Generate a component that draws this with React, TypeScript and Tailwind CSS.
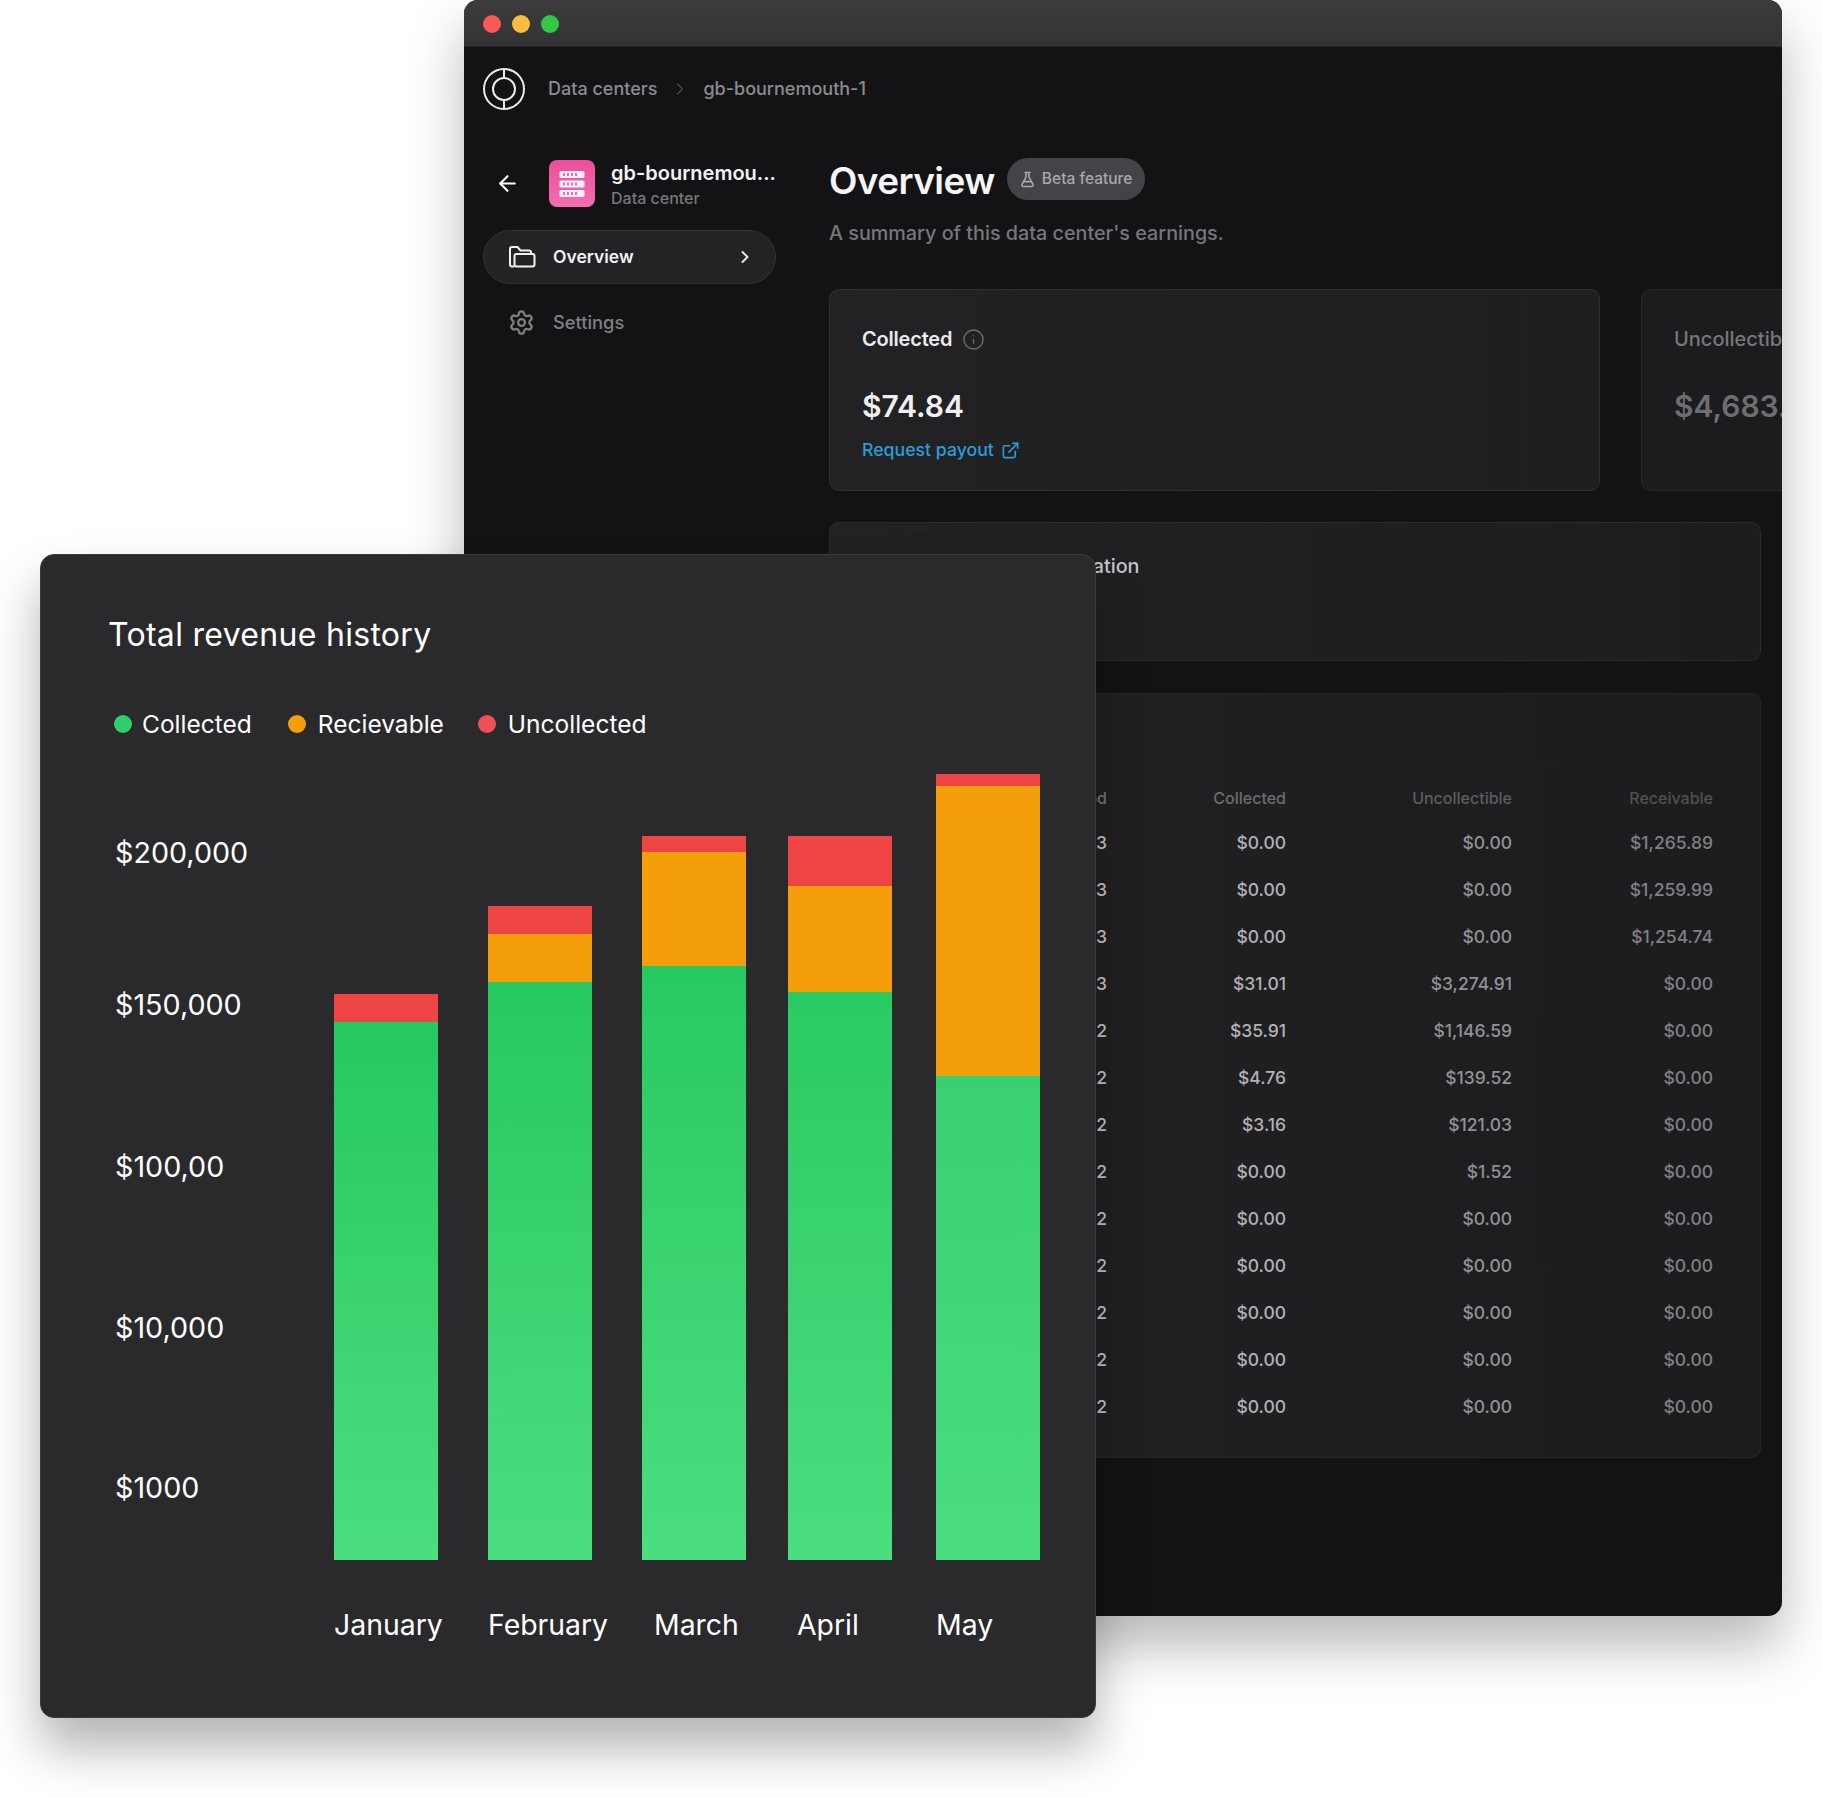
import { ArrowLeft, ChevronRight, ExternalLink, FlaskConical, Info, Settings } from "lucide-react";

const rows = [
  ["May 2023", "$0.00", "$0.00", "$1,265.89"],
  ["Apr 2023", "$0.00", "$0.00", "$1,259.99"],
  ["Mar 2023", "$0.00", "$0.00", "$1,254.74"],
  ["Jan 2023", "$31.01", "$3,274.91", "$0.00"],
  ["Dec 2022", "$35.91", "$1,146.59", "$0.00"],
  ["Nov 2022", "$4.76", "$139.52", "$0.00"],
  ["Oct 2022", "$3.16", "$121.03", "$0.00"],
  ["Sep 2022", "$0.00", "$1.52", "$0.00"],
  ["Aug 2022", "$0.00", "$0.00", "$0.00"],
  ["Jul 2022", "$0.00", "$0.00", "$0.00"],
  ["Jun 2022", "$0.00", "$0.00", "$0.00"],
  ["May 2022", "$0.00", "$0.00", "$0.00"],
  ["Apr 2022", "$0.00", "$0.00", "$0.00"],
];

// heights in px: red, orange, green
const bars = [
  { red: 28, orange: 0, green: 538, ml: 0, fill: "from-[#26c85f]" },
  { red: 28, orange: 48, green: 578, ml: 50, fill: "from-[#26c85f]" },
  { red: 16, orange: 114, green: 594, ml: 50, fill: "from-[#28c961]" },
  { red: 50, orange: 106, green: 568, ml: 42, fill: "from-[#2aca62]" },
  { red: 12, orange: 290, green: 484, ml: 44, fill: "from-[#38d070]" },
];

const LogoIcon = () => (
  <svg width="42" height="42" viewBox="0 0 42 42" fill="none" stroke="#ececee" strokeWidth="2">
    <circle cx="21" cy="21" r="20" />
    <circle cx="21" cy="21" r="11" />
    <path d="M21 1v9M21 32v9" />
  </svg>
);

const ServerIcon = () => (
  <svg width="28" height="30" viewBox="0 0 28 30" fill="none">
    <rect x="1.5" y="2" width="25" height="7" rx="1.5" fill="#fff" fillOpacity="0.9" />
    <rect x="1.5" y="11.5" width="25" height="7" rx="1.5" fill="#fff" fillOpacity="0.9" />
    <rect x="1.5" y="21" width="25" height="7" rx="1.5" fill="#fff" fillOpacity="0.9" />
    <path d="M6 4v3M10 4v3M14 4v3M18 4v3M6 13.5v3M10 13.5v3M14 13.5v3M18 13.5v3M6 23v3M10 23v3M14 23v3M18 23v3" stroke="#ec5aa5" strokeWidth="1.7" />
  </svg>
);

const FolderIcon = () => (
  <svg width="27" height="22" viewBox="0 0 27 22" fill="none" stroke="#f2f2f3" strokeWidth="2" strokeLinejoin="round">
    <path d="M5 20.5H3a2 2 0 0 1-2-2V3a2 2 0 0 1 2-2h5.5l3 3.5H20a2 2 0 0 1 2 2V8" />
    <rect x="5.5" y="8" width="20" height="12.5" rx="2" />
  </svg>
);

const TableRow = ({ row }: { row: string[] }) => (
  <div className="grid h-[47px] grid-cols-[245px_179px_226px_201px] items-center text-right text-[17.5px] font-medium">
    <span className="text-[#c4c4c6]">{row[0]}</span>
    <span className="text-[#b2b2b4]">{row[1]}</span>
    <span className="text-[#929294]">{row[2]}</span>
    <span className="text-[#808082]">{row[3]}</span>
  </div>
);

const BackWindow = () => (
  <div className="absolute left-[464px] top-0 h-[1616px] w-[1318px] overflow-hidden rounded-[14px] bg-[#131316] shadow-[0_30px_55px_rgba(0,0,0,0.28)]">
    <div className="flex h-[47px] items-center gap-[11px] border-b border-[#2a2a2c] bg-gradient-to-b from-[#3c3c3e] to-[#333335] pl-[19px] pt-[2px]">
      <div className="h-[18px] w-[18px] rounded-full bg-[#fc5753]" />
      <div className="h-[18px] w-[18px] rounded-full bg-[#fdbc40]" />
      <div className="h-[18px] w-[18px] rounded-full bg-[#33c748]" />
    </div>

    <div className="flex h-[83px] items-center pl-[19px] text-[18px] font-medium text-[#8c8c8f]">
      <LogoIcon />
      <span className="ml-[23px]">Data centers</span>
      <ChevronRight size={20} className="ml-[13px] text-[#4a4a4d]" strokeWidth={1.5} />
      <span className="ml-[13px]">gb-bournemouth-1</span>
    </div>

    <div className="flex">
      <div className="w-[365px] shrink-0 pl-[19px] pt-[30px]">
        <div className="flex h-[47px] items-center pl-[12px]">
          <ArrowLeft size={25} className="text-white" strokeWidth={2} />
          <div className="ml-[29px] flex h-[47px] w-[46px] items-center justify-center rounded-[8px] bg-gradient-to-b from-[#ec4c9c] to-[#f06fb0]">
            <ServerIcon />
          </div>
          <div className="ml-[16px] flex flex-col self-start">
            <span className="text-[20px] font-semibold leading-[26px] text-[#f2f2f3]">gb-bournemou...</span>
            <span className="text-[16px] font-medium leading-[24px] text-[#77777a]">Data center</span>
          </div>
        </div>
        <div className="mt-[23px] flex h-[54px] w-[293px] items-center rounded-full border border-[#323235] bg-[#232326] pl-[25px] pr-[20px]">
          <FolderIcon />
          <span className="ml-[17px] flex-1 text-[17.5px] font-semibold text-[#f2f2f3]">Overview</span>
          <ChevronRight size={20} className="text-[#e5e5e6]" strokeWidth={2.4} />
        </div>
        <div className="mt-[11px] flex h-[55px] items-center pl-[25px]">
          <Settings size={27} className="text-[#808083]" strokeWidth={2} />
          <span className="ml-[18px] text-[18.3px] font-medium text-[#808083]">Settings</span>
        </div>
      </div>

      <div className="min-w-0 flex-1 pt-[28px]">
        <div className="flex h-[42px] items-center">
          <h1 className="mt-[3px] text-[37px] font-semibold tracking-[-0.6px] text-[#f5f5f6]">Overview</h1>
          <div className="ml-[12px] flex h-[42px] w-[138px] items-center justify-center gap-[6px] rounded-full bg-[#434348] text-[15.5px] font-medium text-[#a9a9ac]">
            <FlaskConical size={17} strokeWidth={2.2} />
            <span>Beta feature</span>
          </div>
        </div>
        <p className="mt-[19px] text-[19.75px] font-medium leading-[28px] text-[#77777a]">
          A summary of this data center's earnings.
        </p>

        <div className="mt-[42px] flex w-[1000px] gap-[41px]">
          <div className="h-[202px] w-[771px] shrink-0 rounded-[10px] border border-[#2f2f33] bg-gradient-to-r from-[#222225] to-[#1f1f22] pl-[32px] pt-[37px]">
            <div className="flex h-[24px] items-center gap-[10px] text-[20px] font-semibold tracking-[-0.2px] text-[#eaeaeb]">
              Collected
              <Info size={23} className="text-[#6a6a6d]" strokeWidth={1.5} />
            </div>
            <div className="mt-[35px] text-[30px] font-semibold leading-[40px] text-[#f0f0f1]">$74.84</div>
            <div className="mt-[12px] flex h-[24px] items-center gap-[7px] text-[17.7px] font-medium text-[#2b9ed8]">
              Request payout
              <ExternalLink size={19} strokeWidth={2} />
            </div>
          </div>
          <div className="h-[202px] w-[300px] shrink-0 rounded-[10px] border border-[#28282b] bg-[#1c1c1f] pl-[32px] pt-[37px]">
            <div className="flex h-[24px] items-center text-[20px] font-medium text-[#77777a]">Uncollectible</div>
            <div className="mt-[35px] text-[30px] font-semibold leading-[40px] text-[#6e6e70]">$4,683.21</div>
          </div>
        </div>

        <div className="mt-[31px] h-[139px] w-[932px] rounded-[10px] border border-[#2b2b2f] bg-gradient-to-r from-[#222225] to-[#1d1d20] pl-[32px] pt-[31px]">
          <div className="text-[19.75px] font-medium leading-[24px] text-[#c4c4c6]">Payment account information</div>
        </div>

        <div className="mt-[32px] h-[765px] w-[932px] rounded-[10px] border border-[#262629] bg-gradient-to-r from-[#222225] to-[#1c1c1f] pl-[32px] pt-[81px]">
          <div className="grid h-[45px] grid-cols-[245px_179px_226px_201px] items-center text-right text-[16px] font-medium">
            <span className="text-[#77777a]">Period</span>
            <span className="text-[#6c6c6f]">Collected</span>
            <span className="text-[#5c5c5f]">Uncollectible</span>
            <span className="text-[#505053]">Receivable</span>
          </div>
          {rows.map((row, i) => (
            <TableRow key={i} row={row} />
          ))}
        </div>
      </div>
    </div>
  </div>
);

const RevenuePanel = () => (
  <div className="absolute left-[40px] top-[554px] h-[1164px] w-[1056px] rounded-[14px] border border-[#3a3a3c] bg-[#2a2a2c] text-white shadow-[0_30px_50px_rgba(0,0,0,0.3)]">
    <h2 className="pl-[67px] pt-[60px] text-[32px] font-normal leading-[40px] tracking-[0.3px]">Total revenue history</h2>

    <div className="ml-[73px] mt-[54px] flex h-[30px] items-center text-[24.5px]">
      <div className="flex items-center gap-[10px]">
        <div className="h-[18px] w-[18px] rounded-full bg-[#2ecf68]" />
        <span>Collected</span>
      </div>
      <div className="ml-[36px] flex items-center gap-[12px]">
        <div className="h-[18px] w-[18px] rounded-full bg-[#f59e0b]" />
        <span>Recievable</span>
      </div>
      <div className="ml-[34px] flex items-center gap-[12px]">
        <div className="h-[18px] w-[18px] rounded-full bg-[#ef5058]" />
        <span>Uncollected</span>
      </div>
    </div>

    <div className="mt-[35px] flex h-[786px]">
      <div className="flex w-[293px] flex-col pl-[74px] text-[28.7px] leading-[36px]">
        <span className="mt-[61px]">$200,000</span>
        <span className="mt-[116px]">$150,000</span>
        <span className="mt-[126px]">$100,00</span>
        <span className="mt-[125px]">$10,000</span>
        <span className="mt-[124px]">$1000</span>
      </div>
      <div className="flex items-end">
        {bars.map((bar, i) => (
          <div key={i} className="flex w-[104px] flex-col" style={{ marginLeft: bar.ml }}>
            <div className="bg-[#ef4444]" style={{ height: bar.red }} />
            <div className="bg-[#f59e0b]" style={{ height: bar.orange }} />
            <div className={`bg-gradient-to-b ${bar.fill} to-[#4ade80]`} style={{ height: bar.green }} />
          </div>
        ))}
      </div>
    </div>

    <div className="mt-[47px] flex pl-[293px] text-[28.4px] leading-[36px]">
      <span className="w-[154px]">January</span>
      <span className="w-[166px]">February</span>
      <span className="w-[143px]">March</span>
      <span className="w-[139px]">April</span>
      <span>May</span>
    </div>
  </div>
);

export default function App() {
  return (
    <div className="relative h-[1798px] w-[1822px] overflow-hidden bg-white font-['Inter',sans-serif]">
      <BackWindow />
      <RevenuePanel />
    </div>
  );
}
